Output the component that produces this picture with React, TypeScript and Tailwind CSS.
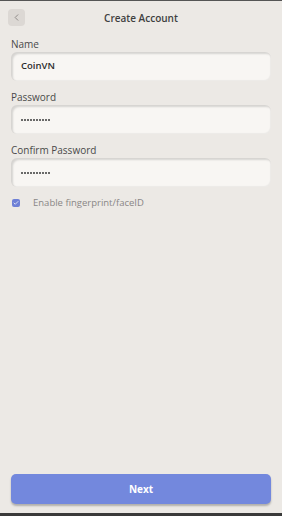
import { ChevronLeft, Check } from "lucide-react";

const Dots = () => (
  <div className="flex gap-[1px]">
    {Array.from({ length: 10 }).map((_, i) => (
      <span key={i} className="w-[2px] h-[2px] rounded-full bg-[#3a3a3a]" />
    ))}
  </div>
);

const Field = ({ label, value, secret }: { label: string; value?: string; secret?: boolean }) => (
  <div className="flex flex-col">
    <label className="text-[10px] leading-[12px] text-[#4a4a4a]">{label}</label>
    <div className="mt-[2px] h-[29px] rounded-[6px] bg-[#f8f6f3] flex items-center px-[10px] shadow-[inset_2px_2px_2px_rgba(0,0,0,0.14),inset_-1px_-1px_1px_rgba(0,0,0,0.05)]">
      {secret ? <Dots /> : <span className="text-[9.5px] font-semibold text-[#2c2c2c]">{value}</span>}
    </div>
  </div>
);

export default function App() {
  return (
    <div
      className="w-[282px] h-[516px] bg-[#ece9e5] flex flex-col border-t border-[#555] border-b-[3px] border-b-[#3a3a3a]"
      style={{ fontFamily: "'Open Sans', 'Noto Sans', sans-serif" }}
    >
      {/* header */}
      <div className="relative h-[34px] flex items-center justify-center">
        <button className="absolute left-[8px] top-[8px] w-[17px] h-[17px] rounded-[4px] bg-[#dcd8d4] flex items-center justify-center">
          <ChevronLeft className="w-[11px] h-[11px] text-[#8a8683]" strokeWidth={2} />
        </button>
        <h1 className="text-[10px] font-semibold text-[#3f3f3f]">Create Account</h1>
      </div>

      {/* form */}
      <div className="flex flex-col gap-[10px] px-[11px] pt-[3px]">
        <Field label="Name" value="CoinVN" />
        <Field label="Password" secret />
        <Field label="Confirm Password" secret />
      </div>

      <div className="flex items-center gap-[13px] px-[12px] mt-[9px]">
        <span className="w-[8px] h-[8px] rounded-[2px] bg-[#6e80d6] flex items-center justify-center">
          <Check className="w-[6px] h-[6px] text-white" strokeWidth={3} />
        </span>
        <span className="text-[9.5px] text-[#8a8785]">Enable fingerprint/faceID</span>
      </div>

      <div className="flex-1" />

      {/* button */}
      <div className="px-[11px] pb-[9px]">
        <button className="w-full h-[30px] rounded-[5px] bg-[#7388dd] text-white text-[10px] font-bold shadow-[0_2px_2px_rgba(0,0,0,0.25)]">
          Next
        </button>
      </div>
    </div>
  );
}
